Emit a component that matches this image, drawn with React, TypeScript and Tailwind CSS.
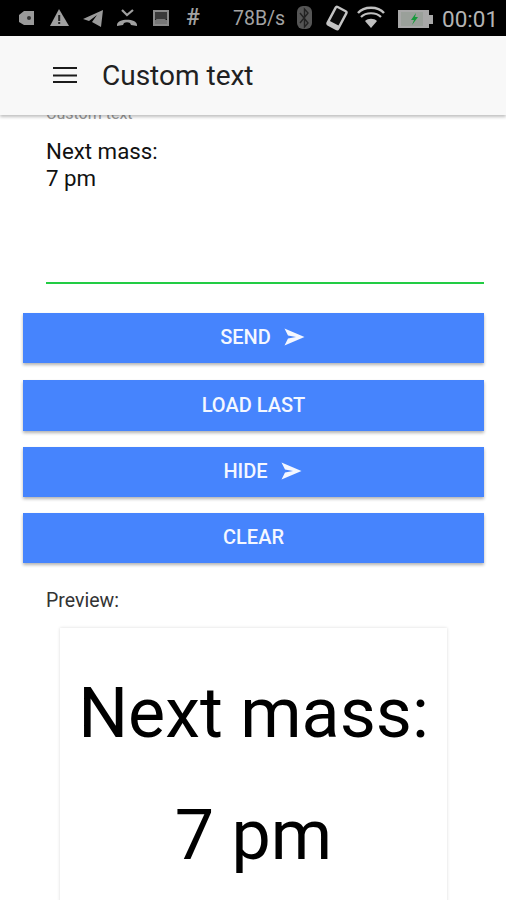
import React from "react";

const Plane = () => (
  <svg width="21" height="18" viewBox="0 0 21 18" className="ml-[13px]">
    <path d="M0.5 0.5 L20.5 9 L0.5 17.5 L4 10.4 L12 9 L4 7.6 Z" fill="#f4f7ff" />
  </svg>
);

function Btn({ label, icon, h }: { label: string; icon?: boolean; h: string }) {
  return (
    <div className={`${h} ${icon ? "pl-[18px]" : ""} pb-[2px] w-[461px] bg-[#4684fd] flex items-center justify-center shadow-[0_2px_3px_rgba(0,0,0,0.3)] text-[#f4f7ff] text-[20px] font-medium`}>
      <span>{label}</span>
      {icon && <Plane />}
    </div>
  );
}

function StatusBar() {
  return (
    <div className="h-[36px] bg-black relative overflow-hidden shrink-0 text-[#a3a3a3]">
      <svg width="506" height="36" viewBox="0 0 506 36" className="absolute left-0 top-0">
        {/* tag */}
        <path d="M19 15 L24 11 H34 V25 H24 L19 22 Z" fill="#9a9a9a" />
        <circle cx="29" cy="18" r="2" fill="#333" />
        {/* warning */}
        <path d="M59 9 L69 26 H50 Z" fill="#a0a0a0" />
        <rect x="58.2" y="15" width="2" height="6" fill="#222" />
        <rect x="58.2" y="22" width="2" height="2" fill="#222" />
        {/* telegram */}
        <path d="M83 19 L103 10 L101 27 L92 22 L97 15 L89 21 Z" fill="#9a9a9a" />
        {/* missed call */}
        <path d="M117 25 C117 18 137 18 137 25 L137 26 L131 25 L130 23 C128 22 126 22 124 23 L123 25 L117 26 Z" fill="#a0a0a0" />
        <path d="M122 10 L127 15 L133 10" fill="none" stroke="#a0a0a0" strokeWidth="2.2" />
        {/* picture */}
        <rect x="154" y="11" width="14" height="14" fill="none" stroke="#8a8a8a" strokeWidth="2" />
        <path d="M155 24 L155 20 L160 17 L167 20 V24 Z" fill="#777" />
        <path d="M155 12 H167 V19 H155 Z" fill="#3a3a3a" />
        {/* bluetooth pill */}
        <rect x="297" y="6" width="15" height="23" rx="6" fill="#555" />
        <path d="M300 13 L308 23 L304.5 27 V9 L308 13 L300 23" fill="none" stroke="#222" strokeWidth="1.4" />
        {/* rotate phone */}
        <g transform="rotate(28 337 18)">
          <rect x="331" y="8" width="12" height="20" rx="1.5" fill="#0a0a0a" stroke="#c4c4c4" strokeWidth="2.4" />
          <rect x="331" y="24" width="12" height="4" fill="#c4c4c4" />
        </g>
        {/* wifi */}
        <path d="M358 13 C364 6 378 6 384 13" fill="none" stroke="#c0c0c0" strokeWidth="2.4" />
        <path d="M361 17 C366 12 376 12 381 17" fill="none" stroke="#c0c0c0" strokeWidth="2.2" />
        <path d="M365 21 C368 18 374 18 377 21 L371 28 Z" fill="#c0c0c0" />
        {/* battery */}
        <rect x="398" y="10" width="31" height="18" fill="#a8a8a8" />
        <rect x="429" y="15" width="4" height="9" fill="#a8a8a8" />
        <rect x="401" y="12" width="22" height="14" fill="#9aa09a" />
        <path d="M416 13 L411 20 H414 L412 25 L418 17 H415 Z" fill="#149a3a" />
      </svg>
      <span className="absolute left-[186px] top-[3px] font-['Roboto',sans-serif] font-medium text-[23px] leading-[30px]">#</span>
      <span className="absolute left-[233px] top-[4px] font-['Roboto',sans-serif] text-[19.5px] leading-[30px]">78B/s</span>
      <span className="absolute left-[442px] top-[4px] font-['Roboto',sans-serif] text-[22.5px] leading-[30px] text-[#b4b4b4]">00:01</span>
    </div>
  );
}

export default function App() {
  return (
    <div className="w-[506px] h-[900px] bg-white overflow-hidden flex flex-col font-['Roboto',sans-serif]">
      <StatusBar />
      <div className="h-[79px] shrink-0 bg-[#f8f8f8] shadow-[0_2px_3px_rgba(0,0,0,0.25)] z-10 flex items-center">
        <svg width="24" height="18" viewBox="0 0 24 18" className="ml-[53px]">
          <path d="M0 1 H24 M0 8.5 H24 M0 15 H24" stroke="#1c1c1c" strokeWidth="2" />
        </svg>
        <span className="ml-[25px] text-[28px] text-[#212121]">Custom text</span>
      </div>
      <div className="h-[169px] ml-[46px] w-[438px] border-b-2 border-[#22cc44] shrink-0 relative text-[22.3px] leading-[27px] text-[#111] pt-[23px]">
        <span className="absolute left-0 top-[-15px] text-[16px] text-[#999]">Custom text</span>
        <div>Next mass:</div>
        <div>7 pm</div>
      </div>
      <div className="mt-[29px] ml-[23px] flex flex-col">
        <Btn label="SEND" icon h="h-[50px]" />
        <div className="h-[17px]" />
        <Btn label="LOAD LAST" h="h-[51px]" />
        <div className="h-[16px]" />
        <Btn label="HIDE" icon h="h-[50px]" />
        <div className="h-[16px]" />
        <Btn label="CLEAR" h="h-[50px]" />
      </div>
      <div className="ml-[46px] mt-[28px] text-[19.5px] leading-[20px] text-[#333]">Preview:</div>
      <div className="ml-[60px] mt-[17px] w-[387px] h-[300px] shrink-0 bg-white shadow-[0_0_3px_rgba(0,0,0,0.15)] text-black text-[70px] leading-[122px] text-center pt-[24px]">
        <div>Next mass:</div>
        <div>7 pm</div>
      </div>
    </div>
  );
}
